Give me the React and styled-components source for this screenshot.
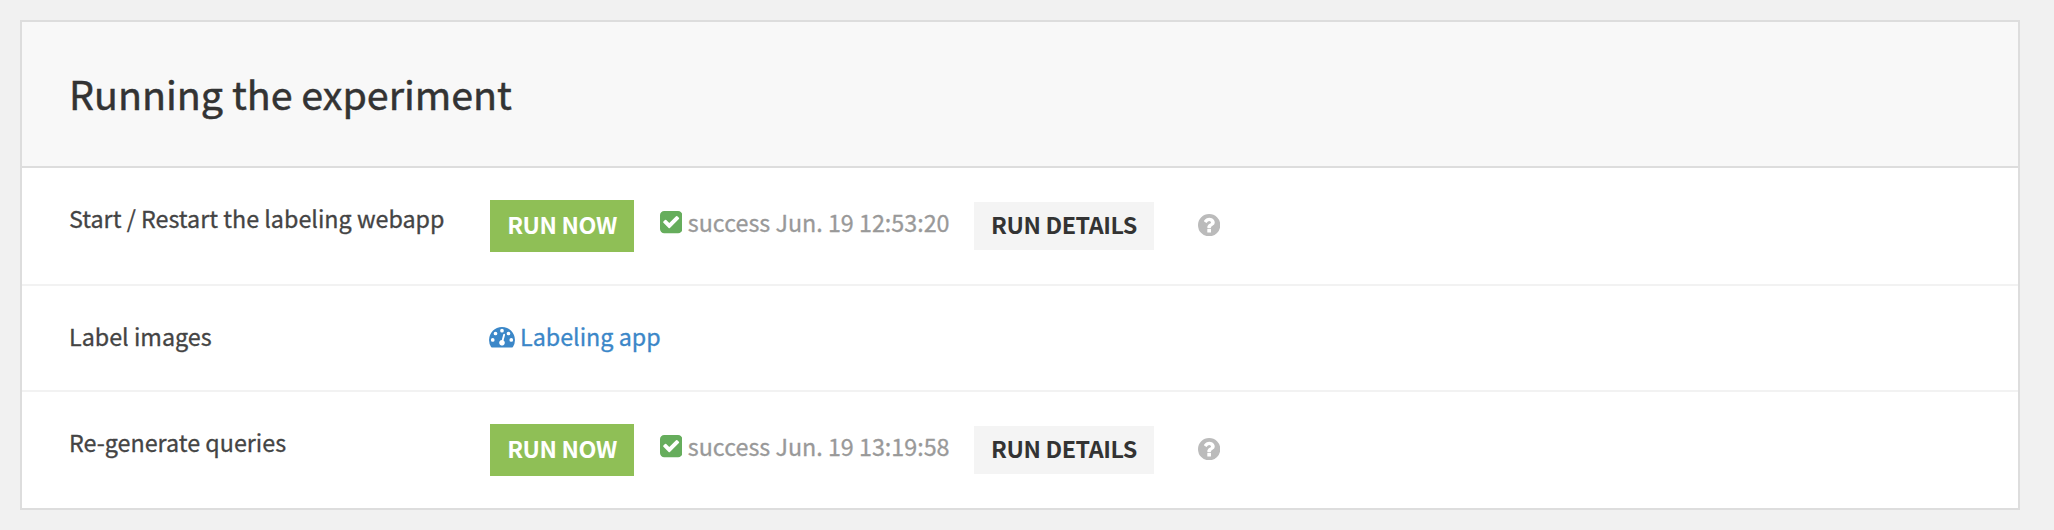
import React from 'react';
import styled, { createGlobalStyle } from 'styled-components';

const COLOR = {
  PAGE: '#f1f1f1',
  BORDER: '#dddddd',
  DIVIDER: '#f2f2f2',
  HEADER: '#f8f8f8',
  TITLE: '#333333',
  TEXT: '#444444',
  MUTED: '#999999',
  GREEN: '#8fbf56',
  SUCCESS: '#66ad5c',
  LINK: '#3b87c8',
  HELP: '#bbbbbb',
};

// icons are drawn on a 1792 unit em with the y axis pointing up
function CheckIcon() {
  return (
    <Icon width="22.3" height="22.3" viewBox="0 -1408 1536 1536" color={COLOR.SUCCESS}>
      <path
        transform="scale(1 -1)"
        d="M685 237l614 614q19 19 19 45t-19 45l-102 102q-19 19-45 19t-45-19l-467-467l-211 211q-19 19-45 19t-45-19l-102-102q-19-19-19-45t19-45l358-358q19-19 45-19t45 19zM1536 1120v-960q0-119-84.5-203.5t-203.5-84.5h-960q-119 0-203.5 84.5t-84.5 203.5v960q0 119 84.5 203.5t203.5 84.5h960q119 0 203.5-84.5t84.5-203.5z"
      />
    </Icon>
  );
}

function HelpIcon() {
  return (
    <Icon width="22.3" height="22.3" viewBox="0 -1408 1536 1536" color={COLOR.HELP}>
      <path
        transform="scale(1 -1)"
        d="M896 160v192q0 14-9 23t-23 9h-192q-14 0-23-9t-9-23v-192q0-14 9-23t23-9h192q14 0 23 9t9 23zM1152 832q0 88-55.5 163t-138.5 116t-170 41q-243 0-371-213q-15-24 8-42l132-100q7-6 19-6q16 0 25 12q53 68 86 92q34 24 86 24q48 0 85.5-26t37.5-59q0-38-20-61t-68-45q-63-28-115.5-86.5t-52.5-125.5v-36q0-14 9-23t23-9h192q14 0 23 9t9 23q0 19 21.5 49.5t54.5 49.5q32 18 49 28.5t46 35t44.5 48t28 60.5t12.5 81zM1536 640a768 768 0 1 0-1536 0a768 768 0 1 0 1536 0z"
      />
    </Icon>
  );
}

function DashboardIcon() {
  return (
    <Icon width="26" height="20.4" viewBox="0 -1280 1792 1408" color={COLOR.LINK}>
      <path
        transform="scale(1 -1)"
        d="M384 384a128 128 0 1 0-256 0a128 128 0 1 0 256 0zM576 832a128 128 0 1 0-256 0a128 128 0 1 0 256 0zM1004 351l101 382q6 26-7.5 48.5t-38.5 29.5t-48-6.5t-30-39.5l-101-382q-60-5-107-43.5t-63-98.5q-20-77 20-146t117-89t146 20t89 117q16 60-6 117t-72 91zM1664 384a128 128 0 1 0-256 0a128 128 0 1 0 256 0zM1024 1024a128 128 0 1 0-256 0a128 128 0 1 0 256 0zM1472 832a128 128 0 1 0-256 0a128 128 0 1 0 256 0zM1792 384q0-261-141-483q-19-29-54-29h-1402q-35 0-54 29q-141 221-141 483q0 182 71 348t191 286t286 191t348 71t348-71t286-191t191-286t71-348z"
      />
    </Icon>
  );
}

function RunRow({ label, status }) {
  return (
    <Row>
      <Label>{label}</Label>
      <Actions>
        <RunButton>RUN NOW</RunButton>
        <Status>
          <CheckIcon />
          <span>{status}</span>
        </Status>
        <DetailsButton>RUN DETAILS</DetailsButton>
        <Help>
          <HelpIcon />
        </Help>
      </Actions>
    </Row>
  );
}

export default function App() {
  return (
    <>
      <GlobalStyle />
      <Card>
        <Header>
          <Title>Running the experiment</Title>
        </Header>
        <RunRow
          label="Start / Restart the labeling webapp"
          status="success Jun. 19 12:53:20"
        />
        <Row>
          <Label>Label images</Label>
          <Link>
            <LinkIcon>
              <DashboardIcon />
            </LinkIcon>
            <span>Labeling app</span>
          </Link>
        </Row>
        <RunRow label="Re-generate queries" status="success Jun. 19 13:19:58" />
      </Card>
    </>
  );
}

const GlobalStyle = createGlobalStyle`
  * {
    box-sizing: border-box;
  }
  body {
    margin: 0;
    padding: 20px 34px 20px 20px;
    background-color: ${COLOR.PAGE};
    font-family: 'Noto Sans CJK JP', 'Noto Sans', sans-serif;
    font-size: 23.3px;
    line-height: 36px;
    color: ${COLOR.TEXT};
    white-space: nowrap;
    -webkit-text-stroke-width: 0.3px;
  }
`;

const Card = styled.section`
  border: 2px solid ${COLOR.BORDER};
  background-color: #ffffff;
`;

const Header = styled.header`
  display: flex;
  align-items: center;
  height: 146px;
  padding: 0 47px 3px;
  border-bottom: 2px solid ${COLOR.BORDER};
  background-color: ${COLOR.HEADER};
`;

const Title = styled.h1`
  margin: 0;
  font-size: 39.4px;
  font-weight: 400;
  line-height: 60px;
  color: ${COLOR.TITLE};
  -webkit-text-stroke-width: 0.5px;
`;

const Row = styled.div`
  display: flex;
  align-items: flex-start;
  min-height: 104px;
  padding: 32px 47px;
  & + & {
    box-sizing: content-box;
    min-height: 40px;
    border-top: 2px solid ${COLOR.DIVIDER};
  }
`;

const Label = styled.div`
  width: 421px;
  flex-shrink: 0;
`;

const Actions = styled.div`
  display: flex;
  align-items: center;
`;

const Button = styled.button`
  border: 0;
  padding: 0 0 4px;
  font-family: inherit;
  font-size: 23.3px;
  font-weight: 700;
  line-height: 40px;
  letter-spacing: -0.42px;
  text-align: center;
  -webkit-text-stroke-width: 0;
`;

const RunButton = styled(Button)`
  width: 144px;
  height: 52px;
  color: #ffffff;
  background-color: ${COLOR.GREEN};
`;

const DetailsButton = styled(Button)`
  width: 180px;
  height: 48px;
  color: ${COLOR.TITLE};
  background-color: #f4f4f4;
`;

const Status = styled.div`
  display: flex;
  align-items: center;
  gap: 5.5px;
  width: 340px;
  padding: 0 0 8px 26px;
  color: ${COLOR.MUTED};
  & > svg {
    margin-top: 1px;
  }
`;

const Help = styled.div`
  display: flex;
  padding: 0 0 2px 44px;
`;

const Link = styled.a`
  display: flex;
  align-items: center;
  gap: 5px;
  margin-left: -1px;
  color: ${COLOR.LINK};
`;

const LinkIcon = styled.span`
  padding-top: 3px;
`;

const Icon = styled.svg`
  display: block;
  flex-shrink: 0;
  fill: ${(p) => p.color};
  fill-rule: evenodd;
`;
